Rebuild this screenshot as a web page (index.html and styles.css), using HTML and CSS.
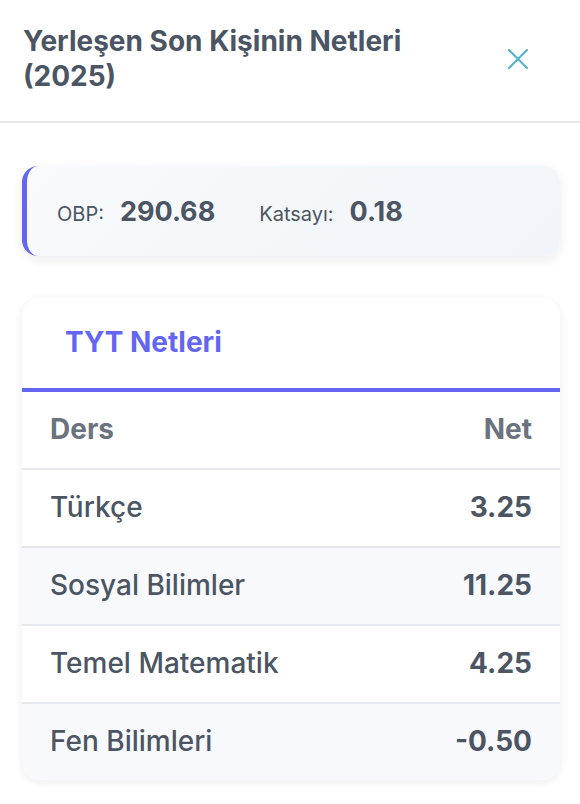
FILE: index.html
```html
<!DOCTYPE html>
<html lang="tr">
<head>
    <meta charset="UTF-8">
    <meta name="viewport" content="width=device-width, initial-scale=1.0">
    <link rel="stylesheet" href="styles.css">
</head>
<body>
    <div class="modal">
        <div class="modal-header">
            <h2 class="modal-title">Yerleşen Son Kişinin Netleri (2025)</h2>
            <button class="close" aria-label="Kapat">
                <svg width="20" height="20" viewBox="0 0 20 20">
                    <path d="M1 1L19 19M19 1L1 19" stroke="#56b4d3" stroke-width="2.2" stroke-linecap="round"/>
                </svg>
            </button>
        </div>
        <div class="modal-body">
            <div class="score-card">
                <div class="score-item">
                    <span class="score-label">OBP:</span>
                    <span class="score-value">290.68</span>
                </div>
                <div class="score-item">
                    <span class="score-label">Katsayı:</span>
                    <span class="score-value">0.18</span>
                </div>
            </div>
            <div class="net-card">
                <div class="tabs">
                    <div class="tab active">TYT Netleri</div>
                </div>
                <table class="net-table">
                    <thead>
                        <tr>
                            <th>Ders</th>
                            <th class="num">Net</th>
                        </tr>
                    </thead>
                    <tbody>
                        <tr>
                            <td>Türkçe</td>
                            <td class="num">3.25</td>
                        </tr>
                        <tr>
                            <td>Sosyal Bilimler</td>
                            <td class="num">11.25</td>
                        </tr>
                        <tr>
                            <td>Temel Matematik</td>
                            <td class="num">4.25</td>
                        </tr>
                        <tr>
                            <td>Fen Bilimleri</td>
                            <td class="num">-0.50</td>
                        </tr>
                    </tbody>
                </table>
            </div>
        </div>
    </div>
</body>
</html>
```

FILE: styles.css
```css
body {
    margin: 0;
    padding: 0;
    font-family: 'Inter', 'Noto Sans', sans-serif;
    background-color: #fff;
    color: #4b5563;
}
.modal {
    width: 580px;
}
.modal-header {
    display: flex;
    align-items: center;
    justify-content: space-between;
    padding: 24px 52px 27px 23px;
    border-bottom: 2px solid #e5e7eb;
}
.modal-title {
    margin: 0;
    max-width: 400px;
    font-size: 28px;
    line-height: 35px;
    font-weight: 700;
    color: #4b5563;
}
.close {
    display: flex;
    padding: 0;
    border: none;
    background: none;
    cursor: pointer;
}
.modal-body {
    display: flex;
    flex-direction: column;
    gap: 42px;
    padding: 43px 20px 26px 22px;
}
.score-card {
    display: flex;
    align-items: center;
    gap: 44px;
    height: 90px;
    box-sizing: border-box;
    padding: 0 30px;
    border-left: 5px solid #6366f1;
    border-radius: 16px;
    background: linear-gradient(135deg, #f8fafc, #f1f5f9);
    box-shadow: 0 4px 12px rgba(15, 23, 42, 0.08);
}
.score-item {
    display: flex;
    align-items: baseline;
    gap: 16px;
}
.score-label {
    font-size: 20px;
    color: #4b5563;
}
.score-value {
    font-size: 27px;
    font-weight: 700;
    color: #4b5563;
}
.net-card {
    border-radius: 18px;
    overflow: hidden;
    background-color: #fff;
    box-shadow: 0 2px 10px rgba(15, 23, 42, 0.08);
}
.tabs {
    display: flex;
    border-bottom: 4px solid #6366f1;
}
.tab {
    padding: 27px 43px 28px;
    font-size: 28px;
    line-height: 35px;
    font-weight: 700;
}
.tab.active {
    color: #6366f1;
}
.net-table {
    width: 100%;
    border-collapse: collapse;
}
.net-table th,
.net-table td {
    padding: 20px 28px 21px;
    font-size: 28px;
    line-height: 35px;
    text-align: left;
}
.net-table th {
    font-weight: 700;
    color: #6b7280;
}
.net-table tr {
    border-bottom: 2px solid #e5e7eb;
}
.net-table tbody tr:last-child {
    border-bottom: none;
}
.net-table tbody tr:nth-child(even) {
    background-color: #f8f9fc;
}
.net-table td {
    font-weight: 500;
    color: #4b5563;
}
.net-table .num {
    text-align: right;
}
.net-table td.num {
    font-weight: 700;
}
```
